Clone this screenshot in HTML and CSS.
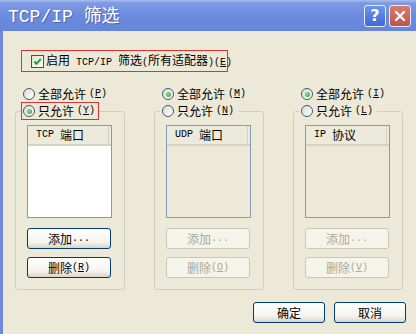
FILE: index.html
```html
<!DOCTYPE html>
<html lang="zh-CN">
  <head>
    <meta charset="UTF-8" />
    <title>TCP/IP 筛选</title>
    <link rel="stylesheet" href="styles.css">
  </head>
  <body>
    <div class="window">
      <div class="titlebar">
        <span class="title"><span class="en">TCP/IP </span>筛选</span>
        <div class="caption-buttons">
          <span class="cap-btn help">?</span>
          <span class="cap-btn close">
            <svg width="12" height="12" viewBox="0 0 12 12">
              <path d="M2 2 L10 10 M10 2 L2 10" stroke="#fff" stroke-width="2.4" stroke-linecap="round" />
            </svg>
          </span>
        </div>
      </div>

      <div class="frame">
        <div class="check-row mark">
          <span class="checkbox">
            <svg width="11" height="11" viewBox="0 0 11 11">
              <path d="M2.5 5.5 L4.5 7.8 L8.8 2.8" fill="none" stroke="#21a121" stroke-width="2" />
            </svg>
          </span>
          <span>启用<span class="en"> TCP/IP </span>筛选<span class="en">(</span>所有适配器<span class="en">)(<u>E</u>)</span></span>
        </div>

        <div class="groups">
          <div class="column">
            <div class="radio-row"><span class="radio"></span>全部允许<span class="en">(<u>P</u>)</span></div>
            <fieldset class="group">
              <legend><span class="radio-row caption mark"><span class="radio on"></span>只允许<span class="en">(<u>Y</u>)</span></span></legend>
              <div class="group-body">
                <div class="listbox">
                  <div class="list-header"><span class="col"><span class="en">TCP</span> 端口</span></div>
                </div>
                <button class="btn">添加<span class="en">...</span></button>
                <button class="btn">删除<span class="en">(<u>R</u>)</span></button>
              </div>
            </fieldset>
          </div>

          <div class="column">
            <div class="radio-row"><span class="radio on"></span>全部允许<span class="en">(<u>M</u>)</span></div>
            <fieldset class="group">
              <legend><span class="radio-row caption"><span class="radio"></span>只允许<span class="en">(<u>N</u>)</span></span></legend>
              <div class="group-body">
                <div class="listbox disabled">
                  <div class="list-header"><span class="col"><span class="en">UDP</span> 端口</span></div>
                </div>
                <button class="btn" disabled>添加<span class="en">...</span></button>
                <button class="btn" disabled>删除<span class="en">(<u>O</u>)</span></button>
              </div>
            </fieldset>
          </div>

          <div class="column">
            <div class="radio-row"><span class="radio on"></span>全部允许<span class="en">(<u>I</u>)</span></div>
            <fieldset class="group">
              <legend><span class="radio-row caption"><span class="radio"></span>只允许<span class="en">(<u>L</u>)</span></span></legend>
              <div class="group-body">
                <div class="listbox disabled">
                  <div class="list-header"><span class="col"><span class="en">IP</span> 协议</span></div>
                </div>
                <button class="btn" disabled>添加<span class="en">...</span></button>
                <button class="btn" disabled>删除<span class="en">(<u>V</u>)</span></button>
              </div>
            </fieldset>
          </div>
        </div>

        <div class="footer">
          <button class="btn wide">确定</button>
          <button class="btn wide">取消</button>
        </div>
      </div>
    </div>
  </body>
</html>
```

FILE: styles.css
```css
* {
  margin: 0;
  padding: 0;
  box-sizing: border-box;
}
body {
  font-family: "Noto Sans CJK SC", sans-serif;
  font-size: 12px;
  line-height: 16px;
  color: #000;
  background-color: #ece9d8;
}
.en {
  font-family: "Liberation Mono", "Noto Sans CJK SC", monospace;
  font-size: 10px;
  white-space: pre;
}
.window {
  width: 416px;
  height: 334px;
  display: flex;
  flex-direction: column;
  overflow: hidden;
  background-color: #ece9d8;
}
.titlebar {
  height: 31px;
  display: flex;
  align-items: center;
  justify-content: space-between;
  padding: 0 5px 0 8px;
  background: linear-gradient(#a9bdf0 0px, #7d9ae4 3px, #6b8bdd 50%, #6586da 100%);
}
.title {
  color: #fff;
  font-size: 18px;
  line-height: 22px;
  text-shadow: 1px 1px 0 #4d67b0;
}
.title .en {
  font-size: 18px;
}
.caption-buttons {
  display: flex;
  gap: 3px;
}
.cap-btn {
  width: 22px;
  height: 22px;
  border: 1px solid #e6ecfb;
  border-radius: 3px;
  display: flex;
  align-items: center;
  justify-content: center;
  color: #fff;
  font-family: "DejaVu Sans", sans-serif;
  font-weight: bold;
  font-size: 16px;
}
.help {
  background: linear-gradient(#6e95ea, #3e68d6);
}
.close {
  background: linear-gradient(#d87c70, #bd544c);
}
.frame {
  flex: 1;
  border-left: 3px solid #7089dc;
}
.mark {
  border: 1px solid #e23131;
}
.check-row {
  width: 207px;
  height: 22px;
  margin: 19px 0 0 18px;
  padding-left: 9px;
  display: flex;
  align-items: center;
  gap: 2px;
  white-space: nowrap;
}
.checkbox {
  width: 13px;
  height: 13px;
  border: 1px solid #2a5585;
  background: linear-gradient(135deg, #e0e0d6, #fff);
  display: flex;
}
.groups {
  display: flex;
  gap: 29px;
  margin: 14px 0 0 12px;
}
.column {
  width: 110px;
}
.radio-row {
  height: 16px;
  padding-left: 8px;
  display: flex;
  align-items: center;
  gap: 3px;
  white-space: nowrap;
}
.radio {
  width: 12px;
  height: 12px;
  border: 1px solid #3d5a7a;
  border-radius: 50%;
  background: linear-gradient(135deg, #dcdcd2, #fff);
  display: flex;
  align-items: center;
  justify-content: center;
}
.radio.on::after {
  content: "";
  width: 5px;
  height: 5px;
  border-radius: 50%;
  background: radial-gradient(circle at 40% 40%, #8ee08e, #21a121);
}
.group {
  border: 1px solid #d0d0bf;
  border-radius: 3px;
  padding: 5px 0 11px 0;
}
.group legend {
  margin-left: 5px;
}
.caption {
  height: 18px;
  padding: 0 3px 0 1px;
  border: 1px solid transparent;
}
.caption.mark {
  border-color: #e23131;
}
.group-body {
  padding-left: 11px;
  display: flex;
  flex-direction: column;
}
.listbox {
  width: 85px;
  height: 93px;
  border: 1px solid #7f9db9;
  background-color: #fff;
}
.listbox.disabled {
  background-color: #ece9d8;
}
.list-header {
  height: 20px;
  display: flex;
  background-color: #ebeadb;
  border-bottom: 2px solid #d6d2c2;
}
.col {
  width: 81px;
  padding-left: 8px;
  display: flex;
  align-items: center;
  gap: 6px;
  border-right: 1px solid #d6d2c2;
}
.btn {
  width: 84px;
  height: 21px;
  margin-top: 10px;
  border: 1px solid #003c74;
  border-radius: 3px;
  background: linear-gradient(#ffffff, #f4f3ee 70%, #d8d3c7);
  font-family: "Noto Sans CJK SC", sans-serif;
  font-size: 12px;
  color: #000;
  display: flex;
  align-items: center;
  justify-content: center;
}
.btn + .btn {
  margin-top: 8px;
}
.btn:disabled {
  border-color: #c9c7ba;
  background: #f5f4ea;
  color: #aca899;
}
.footer {
  display: flex;
  justify-content: flex-end;
  gap: 9px;
  margin-top: 12px;
  padding-right: 10px;
}
.footer .btn {
  margin-top: 0;
}
.wide {
  width: 72px;
}
```
